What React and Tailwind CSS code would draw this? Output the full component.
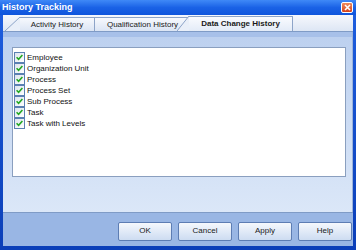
import React from "react";

const items = [
  "Employee",
  "Organization Unit",
  "Process",
  "Process Set",
  "Sub Process",
  "Task",
  "Task with Levels",
];

const Check = () => (
  <span className="w-[11px] h-[11px] shrink-0 border border-[#5b80b2] bg-gradient-to-br from-[#dde4ee] to-white flex items-center justify-center">
    <svg width="9" height="9" viewBox="0 0 9 9">
      <path d="M1.6 4.3 L3.6 6.3 L7.4 2" fill="none" stroke="#22a822" strokeWidth="1.6" />
    </svg>
  </span>
);

const Slant = ({ w, h }) => (
  <svg width={w} height={h} viewBox={`0 0 ${w} ${h}`} className="shrink-0 block">
    <polygon points={`0,${h} ${w},0 ${w},${h}`} fill="#e9eff9" />
    <line x1="0" y1={h} x2={w} y2="0" stroke="#8da4c8" strokeWidth="1" />
  </svg>
);

const Button = ({ children }) => (
  <button className="w-[54px] h-[19px] rounded-[2px] border border-[#5d7db3] bg-gradient-to-b from-[#f5f8fd] to-[#cddcf1] text-[8px] text-[#1a1a1a] flex items-center justify-center">
    {children}
  </button>
);

export default function App() {
  return (
    <div className="w-[356px] h-[250px] flex flex-col bg-gradient-to-b from-[#1f5fe0] to-[#0b3fb8] font-['Liberation_Sans',Arial,sans-serif] overflow-hidden">
      {/* title bar */}
      <div className="h-[15px] shrink-0 flex items-center justify-between pl-[2px] pr-[3px] bg-gradient-to-b from-[#3f89f7] via-[#1a62e6] to-[#0f55dc]">
        <span className="text-[9px] font-bold text-white leading-none">History Tracking</span>
        <span className="w-[12px] h-[11px] rounded-[2px] border border-white bg-gradient-to-b from-[#ee8a5c] to-[#d4401a] flex items-center justify-center">
          <svg width="7" height="7" viewBox="0 0 7 7">
            <path d="M1 1 L6 6 M6 1 L1 6" stroke="white" strokeWidth="1.6" />
          </svg>
        </span>
      </div>

      <div className="flex-1 flex flex-col ml-[3px] mr-[3px] mb-[4px]">
        {/* tab strip */}
        <div className="h-[17px] shrink-0 flex items-end bg-gradient-to-b from-[#f6f8fd] to-[#dde6f4] border-b border-[#7f9bc6] text-[8px] leading-none">
          <div className="flex items-end ml-[2px]">
            <Slant w={15} h={14} />
            <div className="w-[75px] h-[14px] flex items-center justify-center bg-gradient-to-b from-[#f7f9fd] to-[#dbe5f4] border-t border-r border-[#8da4c8] text-[#222]">
              Activity History
            </div>
          </div>
          <div className="w-[95px] h-[14px] flex items-center justify-center bg-gradient-to-b from-[#f7f9fd] to-[#dbe5f4] border-t border-[#8da4c8] text-[#222]">
            Qualification History
          </div>
          <div className="flex items-end -ml-[13px] relative">
            <Slant w={12} h={15} />
            <div className="w-[104px] h-[15px] flex items-center justify-center bg-gradient-to-b from-[#f9fbfe] to-[#e3ebf7] border-t border-r border-[#8da4c8] font-bold text-[#1a1a1a]">
              Data Change History
            </div>
          </div>
        </div>

        {/* panel */}
        <div className="flex-1 flex flex-col bg-gradient-to-b from-[#bcd0ef] to-[#dbe7f8] border-r border-[#9db4da]">
          <div className="h-[5px] shrink-0 bg-[#a7c0e9]" />
          <div className="flex-1 pl-[9px] pr-[6px] pt-[10px] pb-[35px]">
            <div className="h-full bg-white border border-[#8a9fbf] pt-[4px] pl-[1px] flex flex-col">
              {items.map((t) => (
                <div key={t} className="h-[11px] flex items-center gap-[2px]">
                  <Check />
                  <span className="text-[8px] leading-none text-[#111]">{t}</span>
                </div>
              ))}
            </div>
          </div>
        </div>

        {/* buttons */}
        <div className="h-[34px] shrink-0 border-t border-[#7f9bc6] bg-[#99b6e4] flex items-center justify-end gap-[6px] pr-[1px] pt-[3px]">
          <Button>OK</Button>
          <Button>Cancel</Button>
          <Button>Apply</Button>
          <Button>Help</Button>
        </div>
      </div>
    </div>
  );
}
